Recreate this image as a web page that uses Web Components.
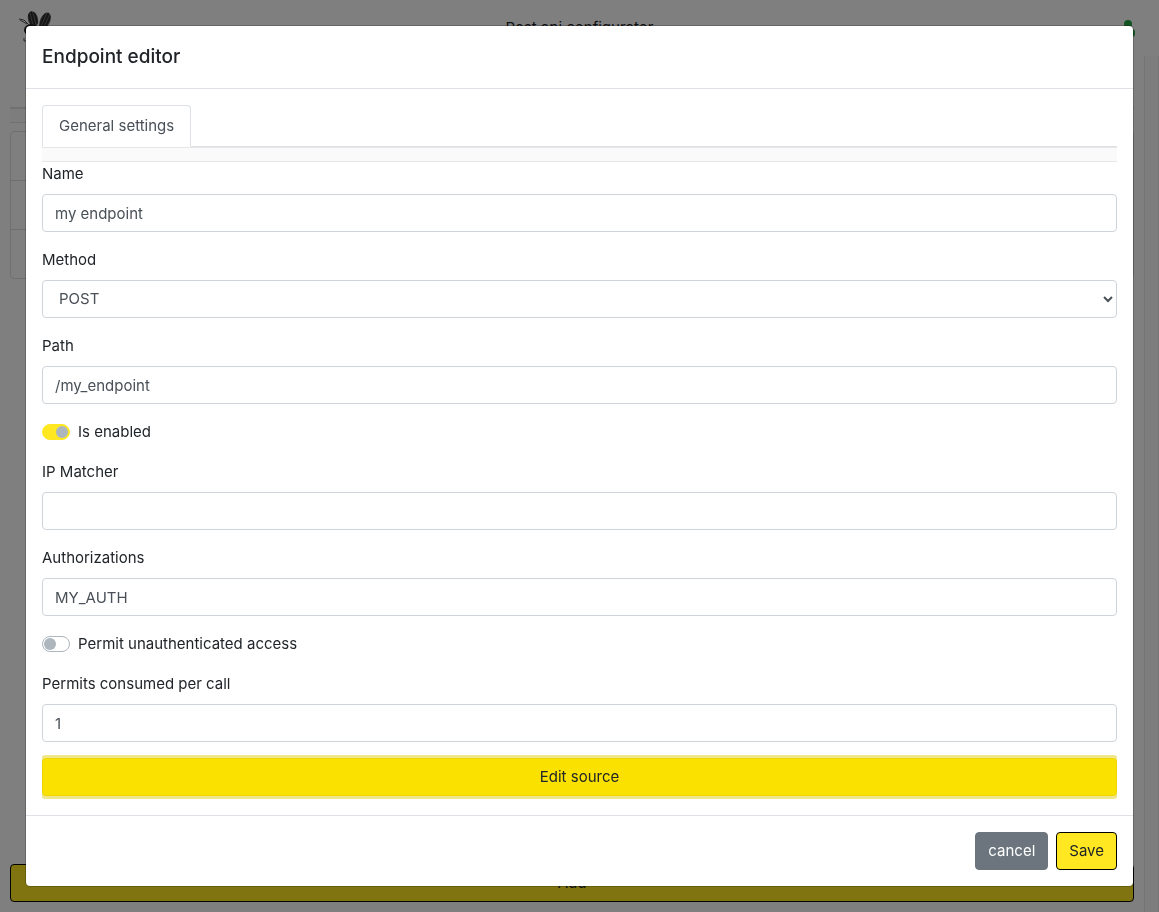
<!DOCTYPE html>
<html lang="en">
<head>
<meta charset="utf-8">
<meta name="viewport" content="width=device-width, initial-scale=1">
<title>Rest api configurator</title>
<style>
    html, body { height: 100%; }
    body {
        margin: 0;
        overflow: hidden;
        font-family: Inter, "Open Sans", sans-serif;
        font-size: 15px;
        line-height: 24px;
        color: #212529;
        background: #fff;
    }
</style>
</head>
<body>
<app-page title-text="Rest api configurator"></app-page>
<editor-modal>
    <span slot="title">Endpoint editor</span>
    <tab-bar label="General settings"></tab-bar>
    <text-field label="Name" value="my endpoint"></text-field>
    <select-field label="Method" options="GET,POST,PUT,PATCH,DELETE" value="POST"></select-field>
    <text-field label="Path" value="/my_endpoint"></text-field>
    <switch-field label="Is enabled" checked></switch-field>
    <text-field label="IP Matcher" value=""></text-field>
    <text-field label="Authorizations" value="MY_AUTH"></text-field>
    <switch-field label="Permit unauthenticated access"></switch-field>
    <text-field label="Permits consumed per call" value="1"></text-field>
    <action-button variant="focused">Edit source</action-button>
    <action-button slot="footer" variant="secondary">cancel</action-button>
    <action-button slot="footer" variant="primary">Save</action-button>
</editor-modal>

<script>
const fieldStyles = `
    :host { display: block; margin-bottom: 16px; }
    * { box-sizing: border-box; }
    label { display: block; margin-bottom: 8px; }
    input, select {
        display: block;
        width: 100%;
        height: 38px;
        padding: 6px 12px;
        font: inherit;
        color: #495057;
        background: #fff;
        border: 1px solid #ced4da;
        border-radius: 4px;
        outline: none;
    }
`;

class TextField extends HTMLElement {
    connectedCallback() {
        this.attachShadow({mode: 'open'}).innerHTML = `
            <style>${fieldStyles}</style>
            <label for="field">${this.getAttribute('label')}</label>
            <input id="field" type="text" value="${this.getAttribute('value')}">
        `;
    }
}

class SelectField extends HTMLElement {
    connectedCallback() {
        const value = this.getAttribute('value');
        const options = this.getAttribute('options').split(',')
            .map(o => `<option${o === value ? ' selected' : ''}>${o}</option>`).join('');
        this.attachShadow({mode: 'open'}).innerHTML = `
            <style>
                ${fieldStyles}
                .wrap { display: grid; align-items: center; }
                .wrap > * { grid-area: 1 / 1; }
                select { appearance: none; padding-left: 16px; }
                svg { justify-self: end; margin-right: 4px; pointer-events: none; }
            </style>
            <label for="field">${this.getAttribute('label')}</label>
            <div class="wrap">
                <select id="field">${options}</select>
                <svg width="10" height="8" viewBox="0 0 10 8" fill="none" stroke="#495057" stroke-width="2"><path d="M1 2l4 4 4-4"/></svg>
            </div>
        `;
    }
}

class SwitchField extends HTMLElement {
    connectedCallback() {
        this.attachShadow({mode: 'open'}).innerHTML = `
            <style>
                :host { display: flex; align-items: center; gap: 8px; margin-bottom: 16px; }
                input {
                    appearance: none;
                    display: flex;
                    align-items: center;
                    box-sizing: border-box;
                    width: 28px;
                    height: 16px;
                    margin: 0;
                    padding: 0 1px;
                    border: 1px solid #adb5bd;
                    border-radius: 8px;
                    background: #fff;
                }
                input::before {
                    content: "";
                    width: 12px;
                    height: 12px;
                    border-radius: 50%;
                    background: #adb5bd;
                }
                input:checked {
                    justify-content: flex-end;
                    border-color: #ffe821;
                    background: #ffe821;
                }
            </style>
            <input id="toggle" type="checkbox"${this.hasAttribute('checked') ? ' checked' : ''}>
            <label for="toggle">${this.getAttribute('label')}</label>
        `;
    }
}

class TabBar extends HTMLElement {
    connectedCallback() {
        this.attachShadow({mode: 'open'}).innerHTML = `
            <style>
                :host { display: block; }
                nav { display: flex; border-bottom: 1px solid #dee2e6; }
                a {
                    margin-bottom: -1px;
                    padding: 8px 16px;
                    color: #495057;
                    text-decoration: none;
                    background: #fff;
                    border: 1px solid #dee2e6;
                    border-bottom-color: #fff;
                    border-radius: 4px 4px 0 0;
                }
                .strip {
                    box-sizing: border-box;
                    height: 15px;
                    background: #fafafa;
                    border: solid #e7e7e7;
                    border-width: 1px 0;
                }
            </style>
            <nav><a href="#general">${this.getAttribute('label')}</a></nav>
            <div class="strip"></div>
        `;
    }
}

class ActionButton extends HTMLElement {
    connectedCallback() {
        this.attachShadow({mode: 'open'}).innerHTML = `
            <style>
                :host { display: block; }
                button {
                    display: block;
                    width: 100%;
                    height: 38px;
                    padding: 6px 12px;
                    font: inherit;
                    color: #212529;
                    background: #ffe821;
                    border: 1px solid #000;
                    border-radius: 4px;
                    outline: none;
                }
                :host([variant="secondary"]) button {
                    color: #fff;
                    background: #6c757d;
                    border-color: #6c757d;
                }
                :host([variant="focused"]) button {
                    background: #fae100;
                    border-color: #edd500;
                    box-shadow: 0 0 0 3px #f0e68c;
                }
            </style>
            <button type="button"><slot></slot></button>
        `;
    }
}

class EditorModal extends HTMLElement {
    connectedCallback() {
        this.attachShadow({mode: 'open'}).innerHTML = `
            <style>
                :host {
                    position: fixed;
                    inset: 0;
                    box-sizing: border-box;
                    padding: 25px;
                    overflow: auto;
                    background: rgba(0, 0, 0, .5);
                }
                .dialog {
                    background: #fff;
                    background-clip: padding-box;
                    border: 1px solid rgba(0, 0, 0, .2);
                    border-radius: 5px;
                }
                header { padding: 16px; border-bottom: 1px solid #dee2e6; }
                h5 { margin: 0; font-size: 19px; font-weight: 500; line-height: 30px; }
                main { padding: 16px; }
                /* keeps the focus ring inside the scrolling part */
                .content { padding-bottom: 3px; overflow: hidden; }
                footer {
                    display: flex;
                    justify-content: flex-end;
                    gap: 8px;
                    padding: 16px;
                    border-top: 1px solid #dee2e6;
                }
            </style>
            <div class="dialog" role="dialog" aria-modal="true">
                <header><h5><slot name="title"></slot></h5></header>
                <main><div class="content"><slot></slot></div></main>
                <footer><slot name="footer"></slot></footer>
            </div>
        `;
    }
}

class AppPage extends HTMLElement {
    connectedCallback() {
        this.attachShadow({mode: 'open'}).innerHTML = `
            <style>
                :host { display: flex; flex-direction: column; height: 100%; }
                header {
                    display: grid;
                    grid-template-columns: 1fr auto 1fr;
                    align-items: center;
                    height: 56px;
                    padding: 0 16px;
                }
                header svg:last-child { justify-self: end; }
                .view { display: flex; flex: 1; min-height: 0; }
                main {
                    display: flex;
                    flex-direction: column;
                    flex: 1;
                    padding: 51px 10px 10px;
                }
                .strip {
                    box-sizing: border-box;
                    height: 16px;
                    background: #fafafa;
                    border: solid #dee2e6;
                    border-width: 2px 0 1px;
                }
                ul {
                    margin: 8px 0 auto;
                    padding: 0;
                    list-style: none;
                    border: 1px solid #dfdfdf;
                    border-radius: 4px;
                }
                li { height: 48px; }
                li + li { border-top: 1px solid #dfdfdf; }
                .track {
                    width: 13px;
                    background: #fafafa;
                    border: solid #e8e8e8;
                    border-width: 0 1px;
                }
            </style>
            <header>
                <svg width="40" height="40" viewBox="0 0 40 40">
                    <defs>
                        <pattern id="veins" width="3" height="3" patternUnits="userSpaceOnUse">
                            <rect width="3" height="3" fill="#2a2a2a"/>
                            <rect width="1" height="3" fill="#6a6a6a"/>
                        </pattern>
                    </defs>
                    <g fill="url(#veins)">
                        <ellipse cx="17" cy="11" rx="5" ry="8" transform="rotate(-14 17 11)"/>
                        <ellipse cx="29" cy="13" rx="5" ry="9" transform="rotate(24 29 13)"/>
                    </g>
                    <ellipse cx="15" cy="22" rx="7" ry="6" fill="#222"/>
                    <path d="M3 11l5 1 5 5M4 12l7 4M8 30v3h4" fill="none" stroke="#555"/>
                </svg>
                <span>${this.getAttribute('title-text')}</span>
                <svg width="24" height="20" viewBox="0 0 24 20" fill="#28a745">
                    <circle cx="9" cy="6" r="4"/>
                    <rect x="2" y="11" width="14" height="8" rx="3"/>
                </svg>
            </header>
            <div class="view">
                <main>
                    <div class="strip"></div>
                    <ul><li></li><li></li><li></li></ul>
                    <action-button variant="primary">Add</action-button>
                </main>
                <div class="track"></div>
            </div>
        `;
    }
}

customElements.define('text-field', TextField);
customElements.define('select-field', SelectField);
customElements.define('switch-field', SwitchField);
customElements.define('tab-bar', TabBar);
customElements.define('action-button', ActionButton);
customElements.define('editor-modal', EditorModal);
customElements.define('app-page', AppPage);
</script>
</body>
</html>
